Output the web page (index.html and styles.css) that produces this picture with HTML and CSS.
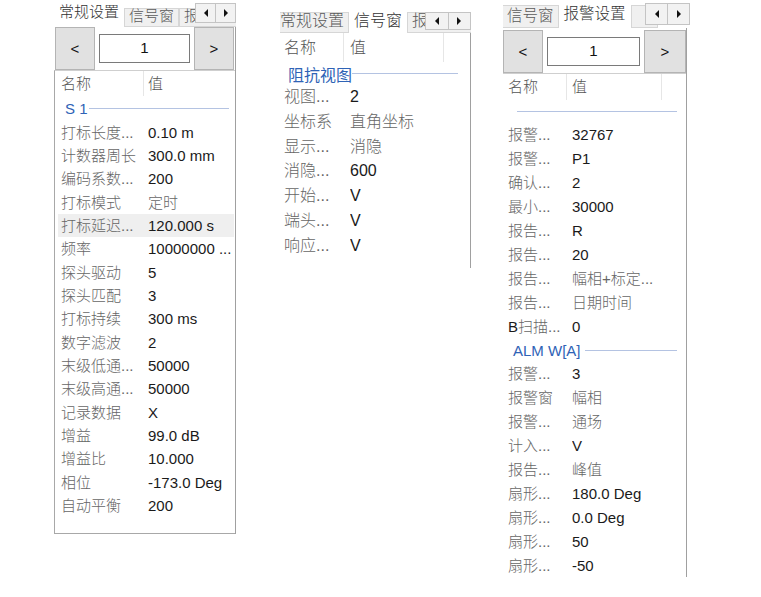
FILE: index.html
```html
<!DOCTYPE html>
<html lang="zh">

<head>
    <meta charset="UTF-8">
    <meta name="viewport" content="width=device-width, initial-scale=1.0">
    <title>参数面板</title>
    <link rel="stylesheet" href="styles.css">
</head>

<body>
    <div class="canvas">
        <!-- 常规设置 -->
        <div class="panel p1">
            <div class="tabs">
                <div class="tab on">常规设置</div>
                <div class="tab">信号窗</div>
                <div class="tab">报警设置</div>
                <div class="scroll"><span class="sb"><i class="tri l"></i></span><span class="sb"><i class="tri r"></i></span></div>
            </div>
            <div class="body">
                <div class="nav">
                    <div class="nbtn">&lt;</div>
                    <div class="num">1</div>
                    <div class="nbtn">&gt;</div>
                </div>
                <div class="list">
                    <div class="head"><span>名称</span><span>值</span></div>
                    <div class="group"><span>S 1</span></div>
                    <div class="row"><span class="k">打标长度...</span><span class="v">0.10 m</span></div>
                    <div class="row"><span class="k">计数器周长</span><span class="v">300.0 mm</span></div>
                    <div class="row"><span class="k">编码系数...</span><span class="v">200</span></div>
                    <div class="row"><span class="k">打标模式</span><span class="v t">定时</span></div>
                    <div class="row sel"><span class="k">打标延迟...</span><span class="v">120.000 s</span></div>
                    <div class="row"><span class="k">频率</span><span class="v">10000000 ...</span></div>
                    <div class="row"><span class="k">探头驱动</span><span class="v">5</span></div>
                    <div class="row"><span class="k">探头匹配</span><span class="v">3</span></div>
                    <div class="row"><span class="k">打标持续</span><span class="v">300 ms</span></div>
                    <div class="row"><span class="k">数字滤波</span><span class="v">2</span></div>
                    <div class="row"><span class="k">末级低通...</span><span class="v">50000</span></div>
                    <div class="row"><span class="k">末级高通...</span><span class="v">50000</span></div>
                    <div class="row"><span class="k">记录数据</span><span class="v">X</span></div>
                    <div class="row"><span class="k">增益</span><span class="v">99.0 dB</span></div>
                    <div class="row"><span class="k">增益比</span><span class="v">10.000</span></div>
                    <div class="row"><span class="k">相位</span><span class="v">-173.0 Deg</span></div>
                    <div class="row"><span class="k">自动平衡</span><span class="v">200</span></div>
                </div>
            </div>
        </div>

        <!-- 信号窗 -->
        <div class="panel p2">
            <div class="tabs">
                <div class="tab">常规设置</div>
                <div class="tab on">信号窗</div>
                <div class="tab">报警设置</div>
                <div class="scroll"><span class="sb"><i class="tri l"></i></span><span class="sb"><i class="tri r"></i></span></div>
            </div>
            <div class="body">
                <div class="list">
                    <div class="head"><span>名称</span><span>值</span><span></span></div>
                    <div class="group"><span>阻抗视图</span></div>
                    <div class="row"><span class="k">视图...</span><span class="v">2</span></div>
                    <div class="row"><span class="k">坐标系</span><span class="v t">直角坐标</span></div>
                    <div class="row"><span class="k">显示...</span><span class="v t">消隐</span></div>
                    <div class="row"><span class="k">消隐...</span><span class="v">600</span></div>
                    <div class="row"><span class="k">开始...</span><span class="v">V</span></div>
                    <div class="row"><span class="k">端头...</span><span class="v">V</span></div>
                    <div class="row"><span class="k">响应...</span><span class="v">V</span></div>
                </div>
            </div>
        </div>

        <!-- 报警设置 -->
        <div class="panel p3">
            <div class="tabs">
                <div class="tab">信号窗</div>
                <div class="tab on">报警设置</div>
                <div class="tab">&nbsp;&nbsp;&nbsp;&nbsp;</div>
                <div class="scroll"><span class="sb"><i class="tri l"></i></span><span class="sb"><i class="tri r"></i></span></div>
            </div>
            <div class="body">
                <div class="nav">
                    <div class="nbtn">&lt;</div>
                    <div class="num">1</div>
                    <div class="nbtn">&gt;</div>
                </div>
                <div class="list">
                    <div class="head"><span>名称</span><span>值</span><span></span></div>
                    <div class="group empty"><span></span></div>
                    <div class="row"><span class="k">报警...</span><span class="v">32767</span></div>
                    <div class="row"><span class="k">报警...</span><span class="v">P1</span></div>
                    <div class="row"><span class="k">确认...</span><span class="v">2</span></div>
                    <div class="row"><span class="k">最小...</span><span class="v">30000</span></div>
                    <div class="row"><span class="k">报告...</span><span class="v">R</span></div>
                    <div class="row"><span class="k">报告...</span><span class="v">20</span></div>
                    <div class="row"><span class="k">报告...</span><span class="v t">幅相+标定...</span></div>
                    <div class="row"><span class="k">报告...</span><span class="v t">日期时间</span></div>
                    <div class="row"><span class="k"><b>B</b>扫描...</span><span class="v">0</span></div>
                    <div class="group"><span>ALM W[A]</span></div>
                    <div class="row"><span class="k">报警...</span><span class="v">3</span></div>
                    <div class="row"><span class="k">报警窗</span><span class="v t">幅相</span></div>
                    <div class="row"><span class="k">报警...</span><span class="v t">通场</span></div>
                    <div class="row"><span class="k">计入...</span><span class="v">V</span></div>
                    <div class="row"><span class="k">报告...</span><span class="v t">峰值</span></div>
                    <div class="row"><span class="k">扇形...</span><span class="v">180.0 Deg</span></div>
                    <div class="row"><span class="k">扇形...</span><span class="v">0.0 Deg</span></div>
                    <div class="row"><span class="k">扇形...</span><span class="v">50</span></div>
                    <div class="row"><span class="k">扇形...</span><span class="v">-50</span></div>
                </div>
            </div>
        </div>
    </div>
</body>

</html>
```

FILE: styles.css
```css
* {
    padding: 0;
    margin: 0;
    box-sizing: border-box;
}

body {
    background-color: #fff;
    font-family: "Liberation Sans", "Noto Sans CJK SC", sans-serif;
    color: #1a1a1a;
}

.canvas {
    display: flex;
    align-items: flex-start;
}

/* 每个面板的尺寸 */
.p1 {
    margin: 3px 0 0 54px;
    width: 182px;
    font-size: 15px;
    --rh: 23.33px;
    --hh: 25px;
    --gh: 24.67px;
    --kp: 3px;
    --kc: 90px;
    --hcols: 86px 1fr;
    --hp: 4px;
    --gp: 7px;
    --gl: 1px;
    --gr: 5px;
}

.p2 {
    margin: 12px 0 0 44px;
    width: 191px;
    font-size: 16px;
    --rh: 24.8px;
    --hh: 29px;
    --gh: 23px;
    --kp: 4px;
    --kc: 70px;
    --hcols: 64px 100px 1fr;
    --hp: 6px;
    --gp: 8px;
    --gl: 0px;
    --gr: 12px;
}

.p3 {
    margin: 3px 0 0 32px;
    width: 184px;
    font-size: 15px;
    --rh: 24px;
    --hh: 26px;
    --gh: 23px;
    --kp: 5px;
    --kc: 69px;
    --hcols: 64px 95px 1fr;
    --hp: 5px;
    --gp: 10px;
    --gl: 4px;
    --gr: 9px;
}

/* 选项卡 */
.tabs {
    position: relative;
    display: flex;
    align-items: flex-end;
    overflow: hidden;
    white-space: nowrap;
}

.tab {
    flex: none;
    padding: 0 4px;
    border: 1px solid #d6d6d6;
    background-color: #f0f0f0;
    color: #5a5a5a;
    font-weight: 300;
}

.tab.on {
    background-color: #fff;
    border-color: #fff;
    color: #333;
}

.p1 .tabs {
    height: 24px;
}

.p1 .tab {
    height: 19px;
    line-height: 13px;
}

.p1 .tab.on {
    height: 24px;
    line-height: 16px;
}

.p2 .tabs {
    height: 21px;
}

.p2 .tab {
    height: 21px;
    line-height: 15px;
}

.p2 .tab:first-child {
    margin-left: -5px;
}

.p3 .tabs {
    height: 25px;
    margin-right: -3px;
    font-size: 15.5px;
}

.p3 .tab {
    height: 23px;
    line-height: 19px;
}

.p3 .tab.on {
    height: 25px;
    line-height: 20px;
}

.p3 .tab:first-child {
    margin-left: -1px;
}

.scroll {
    position: absolute;
    top: 0;
    right: 0;
    display: flex;
    background-color: #fff;
}

.p1 .scroll {
    width: 41px;
    height: 20px;
}

.p2 .scroll {
    width: 46px;
    height: 18px;
}

.p3 .scroll {
    width: 45px;
    height: 22px;
}

.sb {
    flex: 1;
    display: flex;
    align-items: center;
    justify-content: center;
    border: 1px solid #c4c4c4;
    background-color: #f2f2f2;
}

.sb + .sb {
    margin-left: -1px;
}

.tri {
    width: 0;
    height: 0;
    border-top: 4px solid transparent;
    border-bottom: 4px solid transparent;
}

.tri.l {
    border-right: 4px solid #111;
}

.tri.r {
    border-left: 4px solid #111;
}

/* 主体 */
.body {
    border-right: 1px solid #a0a0a0;
}

.p2 .body {
    height: 235px;
}

.p3 .body {
    height: 549px;
}

.nav {
    display: flex;
    align-items: center;
    gap: 4px;
    height: 43px;
}

.p1 .nav {
    padding-left: 1px;
}

.p3 .nav {
    height: 45px;
    padding-top: 2px;
}

.nbtn {
    width: 40px;
    height: 43px;
    display: flex;
    align-items: center;
    justify-content: center;
    background-color: #e1e1e1;
    border: 1px solid #b4b4b4;
    color: #111;
}

.p3 .nbtn:last-child {
    width: 42px;
}

.num {
    width: 91px;
    height: 29px;
    line-height: 25px;
    text-align: center;
    background-color: #fff;
    border: 1px solid #7a7a7a;
    color: #111;
}

.p3 .num {
    width: 93px;
}

/* 属性列表 */
.list {
    white-space: nowrap;
}

.p1 .list {
    height: 464px;
    padding: 0 1px 0 3px;
    border-left: 1px solid #a8a8a8;
    border-top: 1px solid #cfcfcf;
    border-bottom: 1px solid #a8a8a8;
}

.p3 .list {
    border-top: 1px solid #cfcfcf;
}

.head {
    display: grid;
    grid-template-columns: var(--hcols);
    height: var(--hh);
    line-height: var(--hh);
    color: #555;
    font-weight: 300;
}

.head span {
    border-right: 1px solid #e6e6e6;
}

.head span:first-child {
    padding-left: var(--kp);
}

.head span:nth-child(2) {
    padding-left: var(--hp);
}

.head span:last-child {
    border-right: none;
}

.group {
    display: flex;
    align-items: center;
    height: var(--gh);
    padding-left: var(--gp);
    color: #2f63b6;
}

.group::after {
    content: "";
    flex: 1;
    height: 1px;
    margin-left: var(--gl);
    margin-right: var(--gr);
    background-color: #b4c3e2;
}

.group.empty {
    padding-left: 14px;
    --gl: 0px;
}

.row {
    display: grid;
    grid-template-columns: var(--kc) 1fr;
    height: var(--rh);
    line-height: var(--rh);
}

.row.sel {
    background-color: #efefef;
}

.row .k {
    padding-left: var(--kp);
    color: #666;
    font-weight: 300;
    overflow: hidden;
}

.row .k b {
    font-weight: normal;
    color: #1a1a1a;
}

.row .v {
    color: #1a1a1a;
    overflow: hidden;
}

.row .v.t {
    color: #666;
    font-weight: 300;
}
```
